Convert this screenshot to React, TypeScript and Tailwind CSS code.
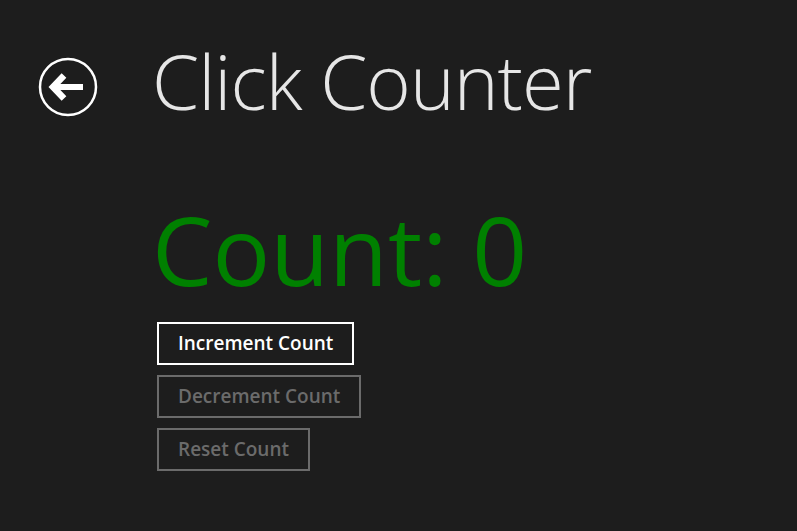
import React, { useState } from "react";

const BackIcon = () => (
  <svg width="60" height="60" viewBox="0 0 60 60" fill="none">
    <circle cx="30" cy="30" r="28" stroke="white" strokeWidth="2.5" />
    <path d="M18 30H45" stroke="white" strokeWidth="6" />
    <path d="M26 18.5L15 30L26 41.5" stroke="white" strokeWidth="6.5" />
  </svg>
);

const CounterButton = ({ label, enabled, onClick }) => (
  <button
    onClick={onClick}
    className={`h-[43px] w-fit border-2 px-[19px] text-left text-[19px] font-semibold leading-none ${
      enabled ? "border-white text-white" : "border-[#6b6b6b] text-[#6b6b6b]"
    }`}
  >
    {label}
  </button>
);

export default function App() {
  const [count, setCount] = useState(0);

  return (
    <div
      className="h-[531px] w-[797px] overflow-hidden bg-[#1d1d1d] text-white"
      style={{ fontFamily: '"Open Sans", "Noto Sans", sans-serif' }}
    >
      <header className="flex items-start pt-[43px]">
        <div className="ml-[38px] mt-[14px] w-[114px]">
          <BackIcon />
        </div>
        <h1 className="text-[76px] font-light leading-none tracking-[-1px] text-[#e6e6e6]">
          Click Counter
        </h1>
      </header>

      <main className="ml-[152px] mt-[82px] flex flex-col">
        <div className="text-[96px] leading-none text-[#008000]">Count: {count}</div>
        <div className="mt-[25px] ml-[5px] flex flex-col gap-[10px]">
          <CounterButton label="Increment Count" enabled onClick={() => setCount(count + 1)} />
          <CounterButton label="Decrement Count" enabled={count > 0} onClick={() => setCount(count - 1)} />
          <CounterButton label="Reset Count" enabled={count > 0} onClick={() => setCount(0)} />
        </div>
      </main>
    </div>
  );
}
